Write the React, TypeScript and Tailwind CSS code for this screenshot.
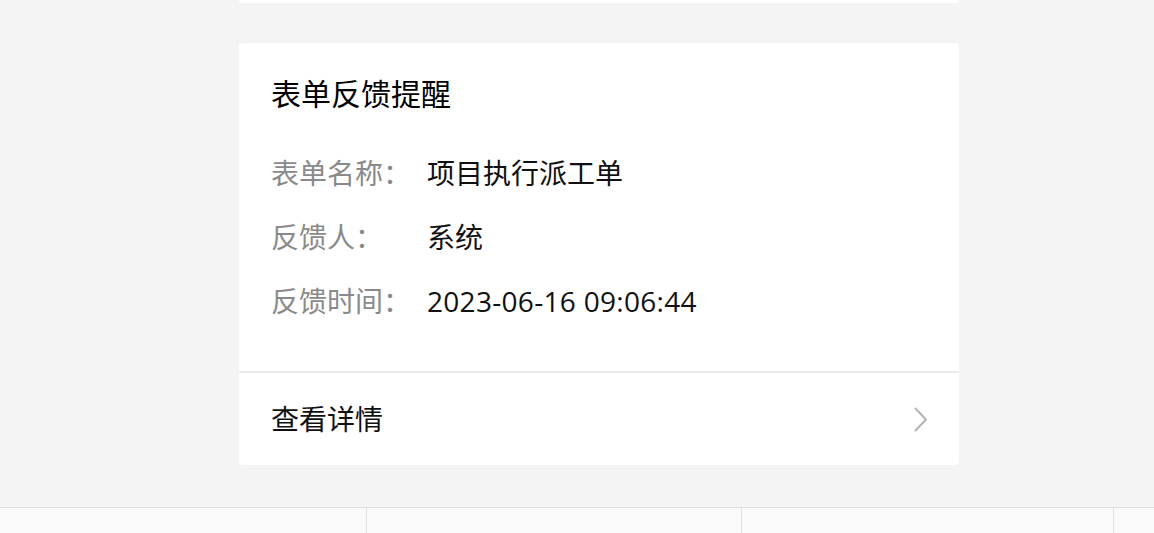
import React from 'react';

interface Row {
  label: string;
  value: string;
  wide?: boolean;
}

const rows: Row[] = [
  { label: '表单名称：', value: '项目执行派工单' },
  { label: '反馈人：', value: '系统' },
  { label: '反馈时间：', value: '2023-06-16 09:06:44', wide: true },
];

const font = { fontFamily: '"Open Sans", "Noto Sans CJK SC", sans-serif' };

const App: React.FC = () => {
  return (
    <div
      className="w-[1154px] h-[533px] bg-[#f4f4f4] flex flex-col overflow-hidden"
      style={font}
    >
      {/* tail of the previous card */}
      <div className="ml-[239px] w-[720px] h-[3px] bg-white rounded-b-[4px]" />

      <div className="ml-[239px] mt-[40px] w-[720px] bg-white rounded-[4px] flex flex-col">
        <div className="px-8 pt-[29px] pb-[48px]">
          <h2 className="text-[30px] leading-[44px] text-black font-normal">
            表单反馈提醒
          </h2>
          <div className="mt-[35px] flex flex-col gap-[20px]">
            {rows.map((r) => (
              <div key={r.label} className="flex items-center text-[28px] leading-[44px]">
                <span className="w-[156px] shrink-0 text-[#8a8a8a]">{r.label}</span>
                <span className={r.wide ? 'text-[#111] tracking-[0.3px]' : 'text-[#111]'}>
                  {r.value}
                </span>
              </div>
            ))}
          </div>
        </div>
        <div className="h-[2px] bg-[#ececec]" />
        <div className="h-[92px] px-8 flex items-center justify-between">
          <span className="text-[28px] leading-[44px] text-[#111]">查看详情</span>
          <svg width="14" height="25" viewBox="0 0 14 25" fill="none" className="mr-[-1px]">
            <path d="M1.5 1.5 L12 12.5 L1.5 23.5" stroke="#b4b4b4" strokeWidth="2" strokeLinecap="round" strokeLinejoin="round" />
          </svg>
        </div>
      </div>

      {/* bottom tab bar */}
      <div className="mt-[42px] flex-1 flex border-t border-[#e2e2e2] bg-[#fafafa]">
        <div className="w-[367px] border-r border-[#e0e0e0]" />
        <div className="w-[375px] border-r border-[#e0e0e0]" />
        <div className="w-[372px] border-r border-[#e0e0e0]" />
        <div className="flex-1" />
      </div>
    </div>
  );
};

export default App;
